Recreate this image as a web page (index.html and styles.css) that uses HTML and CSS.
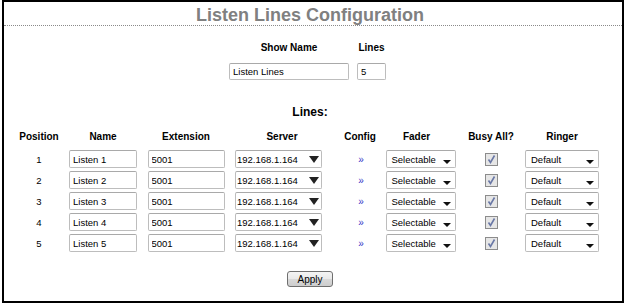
FILE: index.html
```html
<!DOCTYPE html>
<html lang="en">
<head>
    <meta charset="UTF-8">
    <title>Listen Lines Configuration</title>
    <link rel="stylesheet" href="styles.css">
</head>
<body>

<div class="frame">
    <h1 class="title">Listen Lines Configuration</h1>

    <div class="content">
        <div class="show">
            <label class="hd">Show Name</label>
            <label class="hd">Lines</label>
            <input class="field show-name" type="text" value="Listen Lines">
            <input class="field show-lines" type="text" value="5">
        </div>

        <h2 class="section">Lines:</h2>

        <div class="cols heads">
            <span>Position</span>
            <span>Name</span>
            <span>Extension</span>
            <span class="h-server">Server</span>
            <span>Config</span>
            <span class="h-fader">Fader</span>
            <span>Busy All?</span>
            <span>Ringer</span>
        </div>

        <div class="cols rows">
            <span class="pos">1</span>
            <input class="field name" type="text" value="Listen 1">
            <input class="field ext" type="text" value="5001">
            <span class="select server"><span class="val">192.168.1.164</span><span class="arrow-big"></span></span>
            <a class="config" href="#">&raquo;</a>
            <span class="select fader"><span class="val">Selectable</span><span class="arrow-small"></span></span>
            <span class="check"><svg width="13" height="13" viewBox="0 0 13 13"><rect x="0.5" y="0.5" width="12" height="12" fill="#e6e6e6" stroke="#8c8c8c"/><path d="M3.5 6.5 L5.5 9.5 L9.5 2.5" fill="none" stroke="#6a78a6" stroke-width="1.6"/></svg></span>
            <span class="select ringer"><span class="val">Default</span><span class="arrow-small"></span></span>

            <span class="pos">2</span>
            <input class="field name" type="text" value="Listen 2">
            <input class="field ext" type="text" value="5001">
            <span class="select server"><span class="val">192.168.1.164</span><span class="arrow-big"></span></span>
            <a class="config" href="#">&raquo;</a>
            <span class="select fader"><span class="val">Selectable</span><span class="arrow-small"></span></span>
            <span class="check"><svg width="13" height="13" viewBox="0 0 13 13"><rect x="0.5" y="0.5" width="12" height="12" fill="#e6e6e6" stroke="#8c8c8c"/><path d="M3.5 6.5 L5.5 9.5 L9.5 2.5" fill="none" stroke="#6a78a6" stroke-width="1.6"/></svg></span>
            <span class="select ringer"><span class="val">Default</span><span class="arrow-small"></span></span>

            <span class="pos">3</span>
            <input class="field name" type="text" value="Listen 3">
            <input class="field ext" type="text" value="5001">
            <span class="select server"><span class="val">192.168.1.164</span><span class="arrow-big"></span></span>
            <a class="config" href="#">&raquo;</a>
            <span class="select fader"><span class="val">Selectable</span><span class="arrow-small"></span></span>
            <span class="check"><svg width="13" height="13" viewBox="0 0 13 13"><rect x="0.5" y="0.5" width="12" height="12" fill="#e6e6e6" stroke="#8c8c8c"/><path d="M3.5 6.5 L5.5 9.5 L9.5 2.5" fill="none" stroke="#6a78a6" stroke-width="1.6"/></svg></span>
            <span class="select ringer"><span class="val">Default</span><span class="arrow-small"></span></span>

            <span class="pos">4</span>
            <input class="field name" type="text" value="Listen 4">
            <input class="field ext" type="text" value="5001">
            <span class="select server"><span class="val">192.168.1.164</span><span class="arrow-big"></span></span>
            <a class="config" href="#">&raquo;</a>
            <span class="select fader"><span class="val">Selectable</span><span class="arrow-small"></span></span>
            <span class="check"><svg width="13" height="13" viewBox="0 0 13 13"><rect x="0.5" y="0.5" width="12" height="12" fill="#e6e6e6" stroke="#8c8c8c"/><path d="M3.5 6.5 L5.5 9.5 L9.5 2.5" fill="none" stroke="#6a78a6" stroke-width="1.6"/></svg></span>
            <span class="select ringer"><span class="val">Default</span><span class="arrow-small"></span></span>

            <span class="pos">5</span>
            <input class="field name" type="text" value="Listen 5">
            <input class="field ext" type="text" value="5001">
            <span class="select server"><span class="val">192.168.1.164</span><span class="arrow-big"></span></span>
            <a class="config" href="#">&raquo;</a>
            <span class="select fader"><span class="val">Selectable</span><span class="arrow-small"></span></span>
            <span class="check"><svg width="13" height="13" viewBox="0 0 13 13"><rect x="0.5" y="0.5" width="12" height="12" fill="#e6e6e6" stroke="#8c8c8c"/><path d="M3.5 6.5 L5.5 9.5 L9.5 2.5" fill="none" stroke="#6a78a6" stroke-width="1.6"/></svg></span>
            <span class="select ringer"><span class="val">Default</span><span class="arrow-small"></span></span>
        </div>

        <div class="actions">
            <button class="apply">Apply</button>
        </div>
    </div>
</div>

</body>
</html>
```

FILE: styles.css
```css
* {
    margin: 0;
    padding: 0;
    box-sizing: border-box;
}

body {
    background: #fff;
    color: #000;
    font-family: "Liberation Sans", Arial, sans-serif;
    font-size: 9.5px;
}

.frame {
    width: 622px;
    height: 303px;
    margin-left: 2px;
    border: 2px solid #000;
}

.title {
    padding: 4px 6px 0 0;
    line-height: 19px;
    font-size: 18px;
    font-weight: bold;
    color: #808080;
    text-align: center;
    border-bottom: 1px dotted #8a8a8a;
}

.content {
    padding: 0 19px 0 13px;
}

.hd {
    font-size: 10px;
    font-weight: bold;
    line-height: 12px;
}

.show {
    display: grid;
    grid-template-columns: 120px 29px;
    column-gap: 8px;
    row-gap: 9px;
    justify-items: center;
    margin: 16px 0 0 212px;
    width: 157px;
}

.field {
    height: 17px;
    padding: 0 3px;
    border: 1px solid #bdbdbd;
    border-top-color: #a9a9a9;
    border-radius: 2px;
    font-family: inherit;
    font-size: 9.5px;
    color: #000;
    background: #fff;
}

.show-name {
    width: 120px;
}

.show-lines {
    width: 29px;
}

.section {
    margin-top: 25px;
    font-size: 12px;
    line-height: 14px;
    text-align: center;
}

.cols {
    display: grid;
    grid-template-columns: 44px 84px 82px 110px 46px 75px 66px 76px;
    justify-items: center;
    align-items: center;
}

.heads {
    margin-top: 12px;
    font-size: 10px;
    font-weight: bold;
    line-height: 12px;
}

.h-fader {
    margin-right: 8px;
}

.rows {
    margin-top: 7px;
    row-gap: 3px;
    grid-auto-rows: 18px;
}

.rows .field {
    height: 18px;
}

.name {
    width: 68px;
}

.ext {
    width: 77px;
}

.select {
    display: flex;
    align-items: center;
    height: 18px;
    border: 1px solid #bdbdbd;
    border-top-color: #a9a9a9;
    border-radius: 2px;
    background: #fff;
}

.select .val {
    flex: 1;
}

.server {
    width: 87px;
    margin-right: 7px;
    padding: 0 2px 0 1px;
}

.arrow-big {
    width: 0;
    height: 0;
    border-left: 5px solid transparent;
    border-right: 5px solid transparent;
    border-top: 7px solid #222;
}

.fader {
    width: 70px;
    padding: 0 4px 0 5px;
}

.ringer {
    width: 74px;
    padding: 0 4px 0 5px;
}

.arrow-small {
    width: 0;
    height: 0;
    margin-top: 5px;
    border-left: 4px solid transparent;
    border-right: 4px solid transparent;
    border-top: 4px solid #111;
}

.config {
    margin-left: 2px;
    font-size: 10px;
    color: #3535c8;
    text-decoration: none;
}

.check {
    display: flex;
}

.actions {
    margin-top: 19px;
    text-align: center;
}

.apply {
    width: 46px;
    height: 16px;
    border: 1px solid #6f6f6f;
    border-radius: 3px;
    background: linear-gradient(#f4f4f4, #e9e9e9 50%, #d9d9d9 51%, #cdcdcd);
    font-family: inherit;
    font-size: 10px;
    color: #000;
}
```
